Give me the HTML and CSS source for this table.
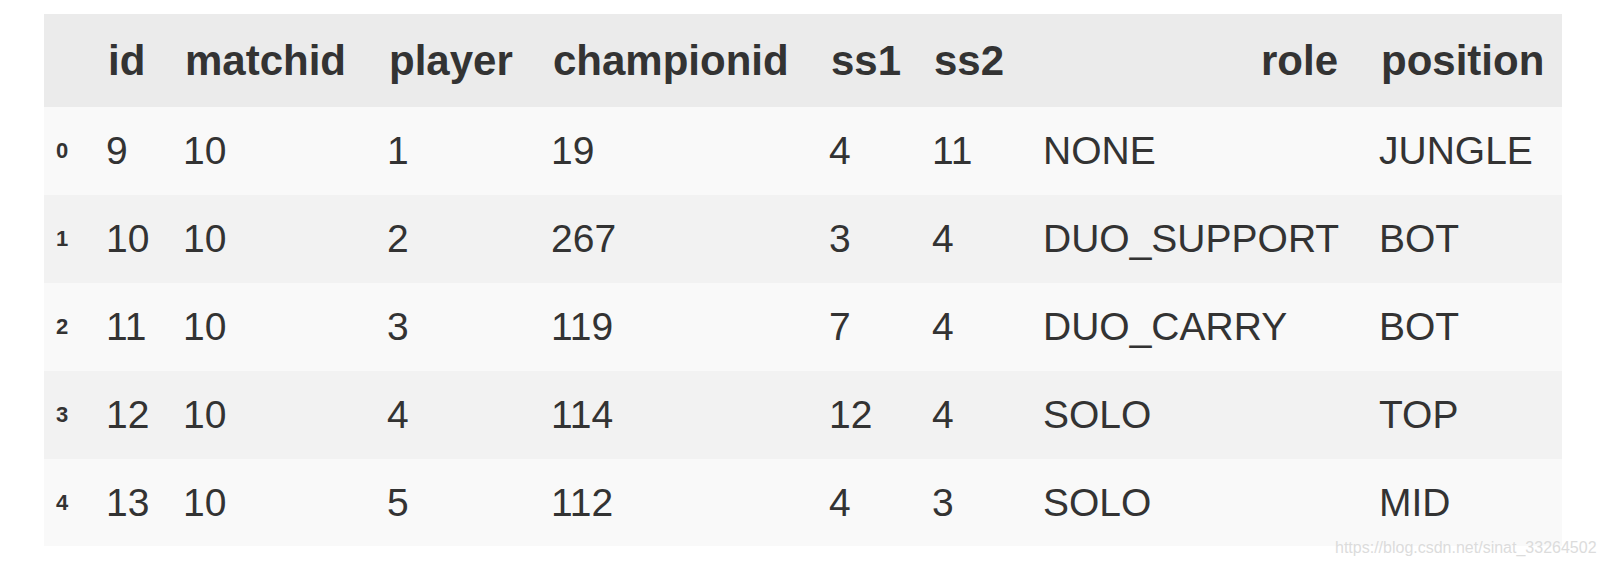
FILE: index.html
```html
<!DOCTYPE html>
<html>
<head>
<meta charset="utf-8">
<link rel="stylesheet" href="styles.css">
</head>
<body>
<div class="page">
  <table class="df">
    <colgroup>
      <col class="c-idx"><col class="c-id"><col class="c-match"><col class="c-player"><col class="c-champ"><col class="c-ss1"><col class="c-ss2"><col class="c-role"><col class="c-pos">
    </colgroup>
    <thead>
      <tr>
        <th></th><th>id</th><th>matchid</th><th>player</th><th>championid</th><th>ss1</th><th>ss2</th><th class="right">role</th><th>position</th>
      </tr>
    </thead>
    <tbody>
      <tr><th class="idx">0</th><td>9</td><td>10</td><td>1</td><td>19</td><td>4</td><td>11</td><td>NONE</td><td>JUNGLE</td></tr>
      <tr><th class="idx">1</th><td>10</td><td>10</td><td>2</td><td>267</td><td>3</td><td>4</td><td>DUO_SUPPORT</td><td>BOT</td></tr>
      <tr><th class="idx">2</th><td>11</td><td>10</td><td>3</td><td>119</td><td>7</td><td>4</td><td>DUO_CARRY</td><td>BOT</td></tr>
      <tr><th class="idx">3</th><td>12</td><td>10</td><td>4</td><td>114</td><td>12</td><td>4</td><td>SOLO</td><td>TOP</td></tr>
      <tr><th class="idx">4</th><td>13</td><td>10</td><td>5</td><td>112</td><td>4</td><td>3</td><td>SOLO</td><td>MID</td></tr>
    </tbody>
  </table>
  <div class="watermark">https://blog.csdn.net/sinat_33264502</div>
</div>
</body>
</html>
```

FILE: styles.css
```css
html, body {
  margin: 0;
  padding: 0;
  background: #ffffff;
}

.page {
  position: relative;
  width: 1604px;
  height: 564px;
  padding: 14px 0 0 44px;
  box-sizing: border-box;
  font-family: "Liberation Sans", Arial, sans-serif;
  color: #333333;
}

.df {
  border-collapse: collapse;
  border-spacing: 0;
  table-layout: fixed;
  width: 1518px;
}

.c-idx { width: 61px; }
.c-id { width: 77px; }
.c-match { width: 204px; }
.c-player { width: 164px; }
.c-champ { width: 278px; }
.c-ss1 { width: 103px; }
.c-ss2 { width: 111px; }
.c-role { width: 336px; }
.c-pos { width: 184px; }

.df th,
.df td {
  padding: 0;
  text-align: left;
  vertical-align: middle;
  white-space: nowrap;
}

.df thead tr {
  background: #ebebeb;
  height: 93px;
}

.df thead th {
  font-size: 42px;
  font-weight: bold;
  line-height: normal;
  padding-left: 3px;
}

.df thead th.right {
  text-align: right;
  padding-left: 0;
  padding-right: 40px;
}

.df tbody tr {
  height: 88px;
}

.df tbody tr:nth-child(odd) {
  background: #f9f9f9;
}

.df tbody tr:nth-child(even) {
  background: #f2f2f2;
}

.df tbody tr:last-child {
  height: 87px;
}

.df td {
  font-size: 39px;
  line-height: normal;
  padding-left: 1px;
}

.df th.idx {
  font-size: 22px;
  font-weight: bold;
  padding-left: 12px;
}

.watermark {
  position: absolute;
  left: 1335px;
  top: 540px;
  font-size: 16px;
  line-height: 16px;
  color: #dcdcdc;
  white-space: nowrap;
}
```
